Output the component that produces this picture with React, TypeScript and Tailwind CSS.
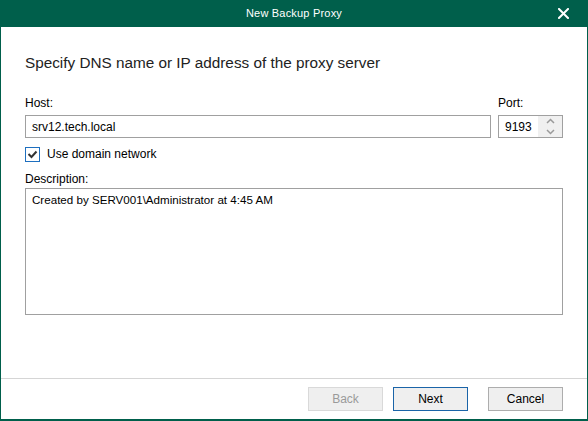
import React from "react";

const font = { fontFamily: '"Liberation Sans", Arial, sans-serif' };

export default function App() {
  return (
    <div
      className="w-[588px] h-[421px] flex flex-col bg-white border-l border-r border-b-2 border-[#005f4b] text-black overflow-hidden"
      style={font}
    >
      {/* Title bar */}
      <div className="relative h-[27px] shrink-0 bg-[#005f4b] flex items-center justify-center">
        <span className="text-[11px] leading-none text-white tracking-[0.2px]">New Backup Proxy</span>
        <div className="absolute right-[18px] top-[8px] w-[11px] h-[11px]">
          <svg width="11" height="11" viewBox="0 0 11 11">
            <path d="M1 1 L10 10 M10 1 L1 10" stroke="white" strokeWidth="2" strokeLinecap="square" />
          </svg>
        </div>
      </div>

      {/* Content */}
      <div className="flex-1 flex flex-col px-[24px]">
        <div className="mt-[26px] text-[15.3px] leading-[20px] text-[#222222]">
          Specify DNS name or IP address of the proxy server
        </div>

        <div className="mt-[22px] flex gap-[7px]">
          <div className="flex-1 flex flex-col">
            <div className="text-[12px] leading-[16px] h-[16px]">Host:</div>
            <div className="mt-[4px] h-[23px] border border-[#a0a0a0] flex items-center px-[6px] text-[12px]">
              srv12.tech.local
            </div>
          </div>
          <div className="w-[65px] flex flex-col">
            <div className="text-[12px] leading-[16px] h-[16px]">Port:</div>
            <div className="mt-[4px] h-[23px] border border-[#a0a0a0] flex">
              <div className="flex-1 flex items-center pl-[6px] text-[12px]">9193</div>
              <div className="w-[24px] flex flex-col bg-[#f0f0f0]">
                <div className="flex-1 flex items-center justify-center">
                  <svg width="9" height="6" viewBox="0 0 9 6">
                    <path d="M1 5 L4.5 1.5 L8 5" stroke="#9a9a9a" strokeWidth="1.5" fill="none" />
                  </svg>
                </div>
                <div className="flex-1 flex items-center justify-center">
                  <svg width="9" height="6" viewBox="0 0 9 6">
                    <path d="M1 1 L4.5 4.5 L8 1" stroke="#9a9a9a" strokeWidth="1.5" fill="none" />
                  </svg>
                </div>
              </div>
            </div>
          </div>
        </div>

        <div className="mt-[8px] flex items-center gap-[7px]">
          <div className="w-[15px] h-[15px] border border-[#1e6fbf] flex items-center justify-center bg-white">
            <svg width="11" height="9" viewBox="0 0 11 9">
              <path d="M1.5 4 L4.5 7 L9.5 1.5" stroke="#333333" strokeWidth="2" fill="none" />
            </svg>
          </div>
          <span className="text-[12px] leading-[16px]">Use domain network</span>
        </div>

        <div className="mt-[9px] text-[12px] leading-[16px] h-[16px]">Description:</div>
        <div className="mt-[1px] h-[127px] border border-[#a0a0a0] px-[6px] py-[3px] text-[11.6px] leading-[16px]">
          Created by SERV001\Administrator at 4:45 AM
        </div>
      </div>

      {/* Footer */}
      <div className="shrink-0 border-t border-[#d5d5d5] pt-[8px] pb-[8px] pr-[24px] flex justify-end">
        <button className="w-[75px] h-[24px] border border-[#d9d9d9] bg-[#efefef] text-[12px] text-[#9a9a9a]">
          Back
        </button>
        <button className="ml-[10px] w-[75px] h-[24px] border border-[#1a64a8] bg-[#efefef] text-[12px] text-black">
          Next
        </button>
        <button className="ml-[20px] w-[75px] h-[24px] border border-[#adadad] bg-[#efefef] text-[12px] text-black">
          Cancel
        </button>
      </div>
    </div>
  );
}
